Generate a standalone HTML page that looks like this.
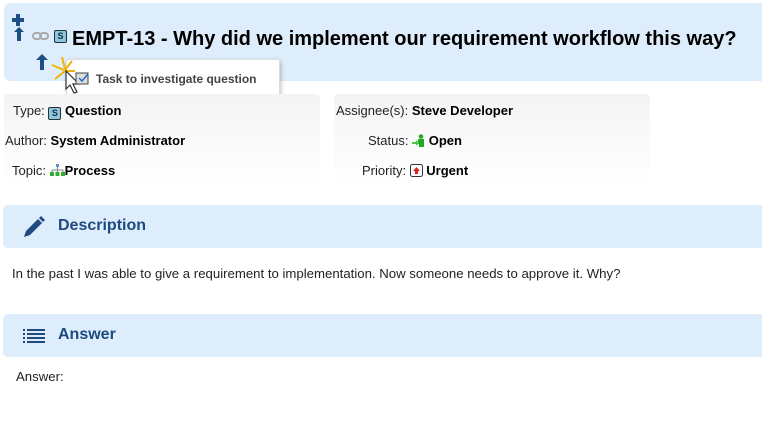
<!DOCTYPE html>
<html><head><style>
body{margin:0;width:762px;height:421px;background:#fff;font-family:"Liberation Sans",Arial,sans-serif;position:relative;overflow:hidden}
.a{position:absolute}
.hdr{left:4px;top:3px;width:770px;height:78px;background:#deedfb;border-radius:6px}
.title{left:72px;top:28px;font-size:20px;font-weight:bold;color:#000;white-space:nowrap}
.sicon{display:inline-block;width:11px;height:11px;border:1px solid #233;border-radius:2px;background:#8ec6e0;font-size:9px;line-height:11px;text-align:center;color:#133;font-weight:bold;vertical-align:-1px}
.panel{background:linear-gradient(#f4f4f4,#fff);border-radius:4px;height:91px;top:94px}
.lbl{font-size:13px;color:#222;white-space:nowrap}
.lbl b{color:#000}
.bar{left:3px;width:770px;height:43px;background:#deedfb;border-radius:5px}
.bar span{position:absolute;left:55px;top:12px;font-size:16px;font-weight:bold;color:#1e4a80}
.txt{font-size:13.2px;color:#222}
.tip{left:66px;top:59px;width:212px;height:41px;background:#fff;border:1px solid #ddd;box-shadow:1px 2px 4px rgba(0,0,0,.25);border-radius:2px}
</style></head><body>
<div class="a hdr"></div>
<svg class="a" style="left:12px;top:14px" width="14" height="28"><path d="M4 0h4v4h4v4h-4v4h-4v-4h-4v-4h4z" fill="#1d4e84"/><path d="M7 13l5 5h-3v9h-4v-9h-3z" fill="#1d4e84"/></svg>
<svg class="a" style="left:32px;top:32px" width="17" height="9"><rect x="1" y="1" width="8" height="6" rx="3" fill="none" stroke="#aaa" stroke-width="2"/><rect x="8" y="1" width="8" height="6" rx="3" fill="none" stroke="#aaa" stroke-width="2"/></svg>
<span class="a sicon" style="left:54px;top:30px">S</span>
<div class="a title">EMPT-13 - Why did we implement our requirement workflow this way?</div>
<svg class="a" style="left:36px;top:54px" width="12" height="16"><path d="M6 0l6 6h-4v10h-4v-10h-4z" fill="#1d4e84"/></svg>
<div class="a tip"></div>
<svg class="a" style="left:50px;top:55px" width="45" height="45"><g stroke="#f0b400" stroke-width="2"><path d="M12 2l3 12M2 10l12 5M22 6l-7 9M5 24l10-8M25 16h-10"/></g><path d="M16 16v18l4-4 4 8 3-1-4-8h6z" fill="#fff" stroke="#333" stroke-width="1.2"/><rect x="26" y="18" width="12" height="11" fill="#ddd" stroke="#444"/><path d="M29 23l3 3 6-7" stroke="#2a6bc0" stroke-width="1.5" fill="none"/></svg>
<div class="a" style="left:96px;top:72px;font-size:12px;font-weight:bold;color:#444">Task to investigate question</div>

<div class="a panel" style="left:4px;width:316px"></div>
<div class="a panel" style="left:334px;width:316px"></div>
<div class="a lbl" style="left:13px;top:103px">Type: <span class="sicon">S</span> <b>Question</b></div>
<div class="a lbl" style="left:5px;top:133px">Author: <b>System Administrator</b></div>
<div class="a lbl" style="left:12px;top:163px">Topic: <svg width="15" height="12" style="vertical-align:-1px"><rect x="6" y="0" width="3" height="3" fill="#5a8fd0"/><path d="M7.5 3v3M2 6h11M2 6v2M7.5 6v2M13 6v2" stroke="#888"/><rect x="0" y="8" width="4" height="4" fill="#3a3"/><rect x="5.5" y="8" width="4" height="4" fill="#3a3"/><rect x="11" y="8" width="4" height="4" fill="#3a3"/></svg><b>Process</b></div>
<div class="a lbl" style="left:336px;top:103px">Assignee(s): <b>Steve Developer</b></div>
<div class="a lbl" style="left:368px;top:133px">Status: <svg width="13" height="13" style="vertical-align:-2px"><circle cx="9" cy="2.5" r="2.3" fill="#2a2"/><path d="M6 5h6v8h-5v-3H6z" fill="#2a2"/><path d="M0 8h4v-2l3 3-3 3v-2H0z" fill="#4c4"/></svg> <b>Open</b></div>
<div class="a lbl" style="left:362px;top:163px">Priority: <svg width="13" height="13" style="vertical-align:-2px"><rect x=".5" y=".5" width="12" height="12" rx="2" fill="#fff" stroke="#333"/><path d="M6.5 3l3.5 4H8v3H5V7H3z" fill="#d22"/></svg> <b>Urgent</b></div>

<div class="a bar" style="top:205px"><svg class="a" style="left:18px;top:10px" width="24" height="24"><path d="M3 22l2-6L17 4l4 4L9 20z" fill="#1e4a80"/><path d="M18 3l2-2 4 4-2 2z" fill="#1e4a80"/></svg><span>Description</span></div>
<div class="a txt" style="left:12px;top:266px">In the past I was able to give a requirement to implementation. Now someone needs to approve it. Why?</div>
<div class="a bar" style="top:314px"><svg class="a" style="left:20px;top:15px" width="22" height="14"><g fill="#1e4a80"><rect x="0" y="0" width="2" height="2"/><rect x="4" y="0" width="18" height="2"/><rect x="0" y="4" width="2" height="2"/><rect x="4" y="4" width="18" height="2"/><rect x="0" y="8" width="2" height="2"/><rect x="4" y="8" width="18" height="2"/><rect x="0" y="12" width="2" height="2"/><rect x="4" y="12" width="18" height="2"/></g></svg><span>Answer</span></div>
<div class="a txt" style="left:16px;top:369px">Answer:</div>
</body></html>
